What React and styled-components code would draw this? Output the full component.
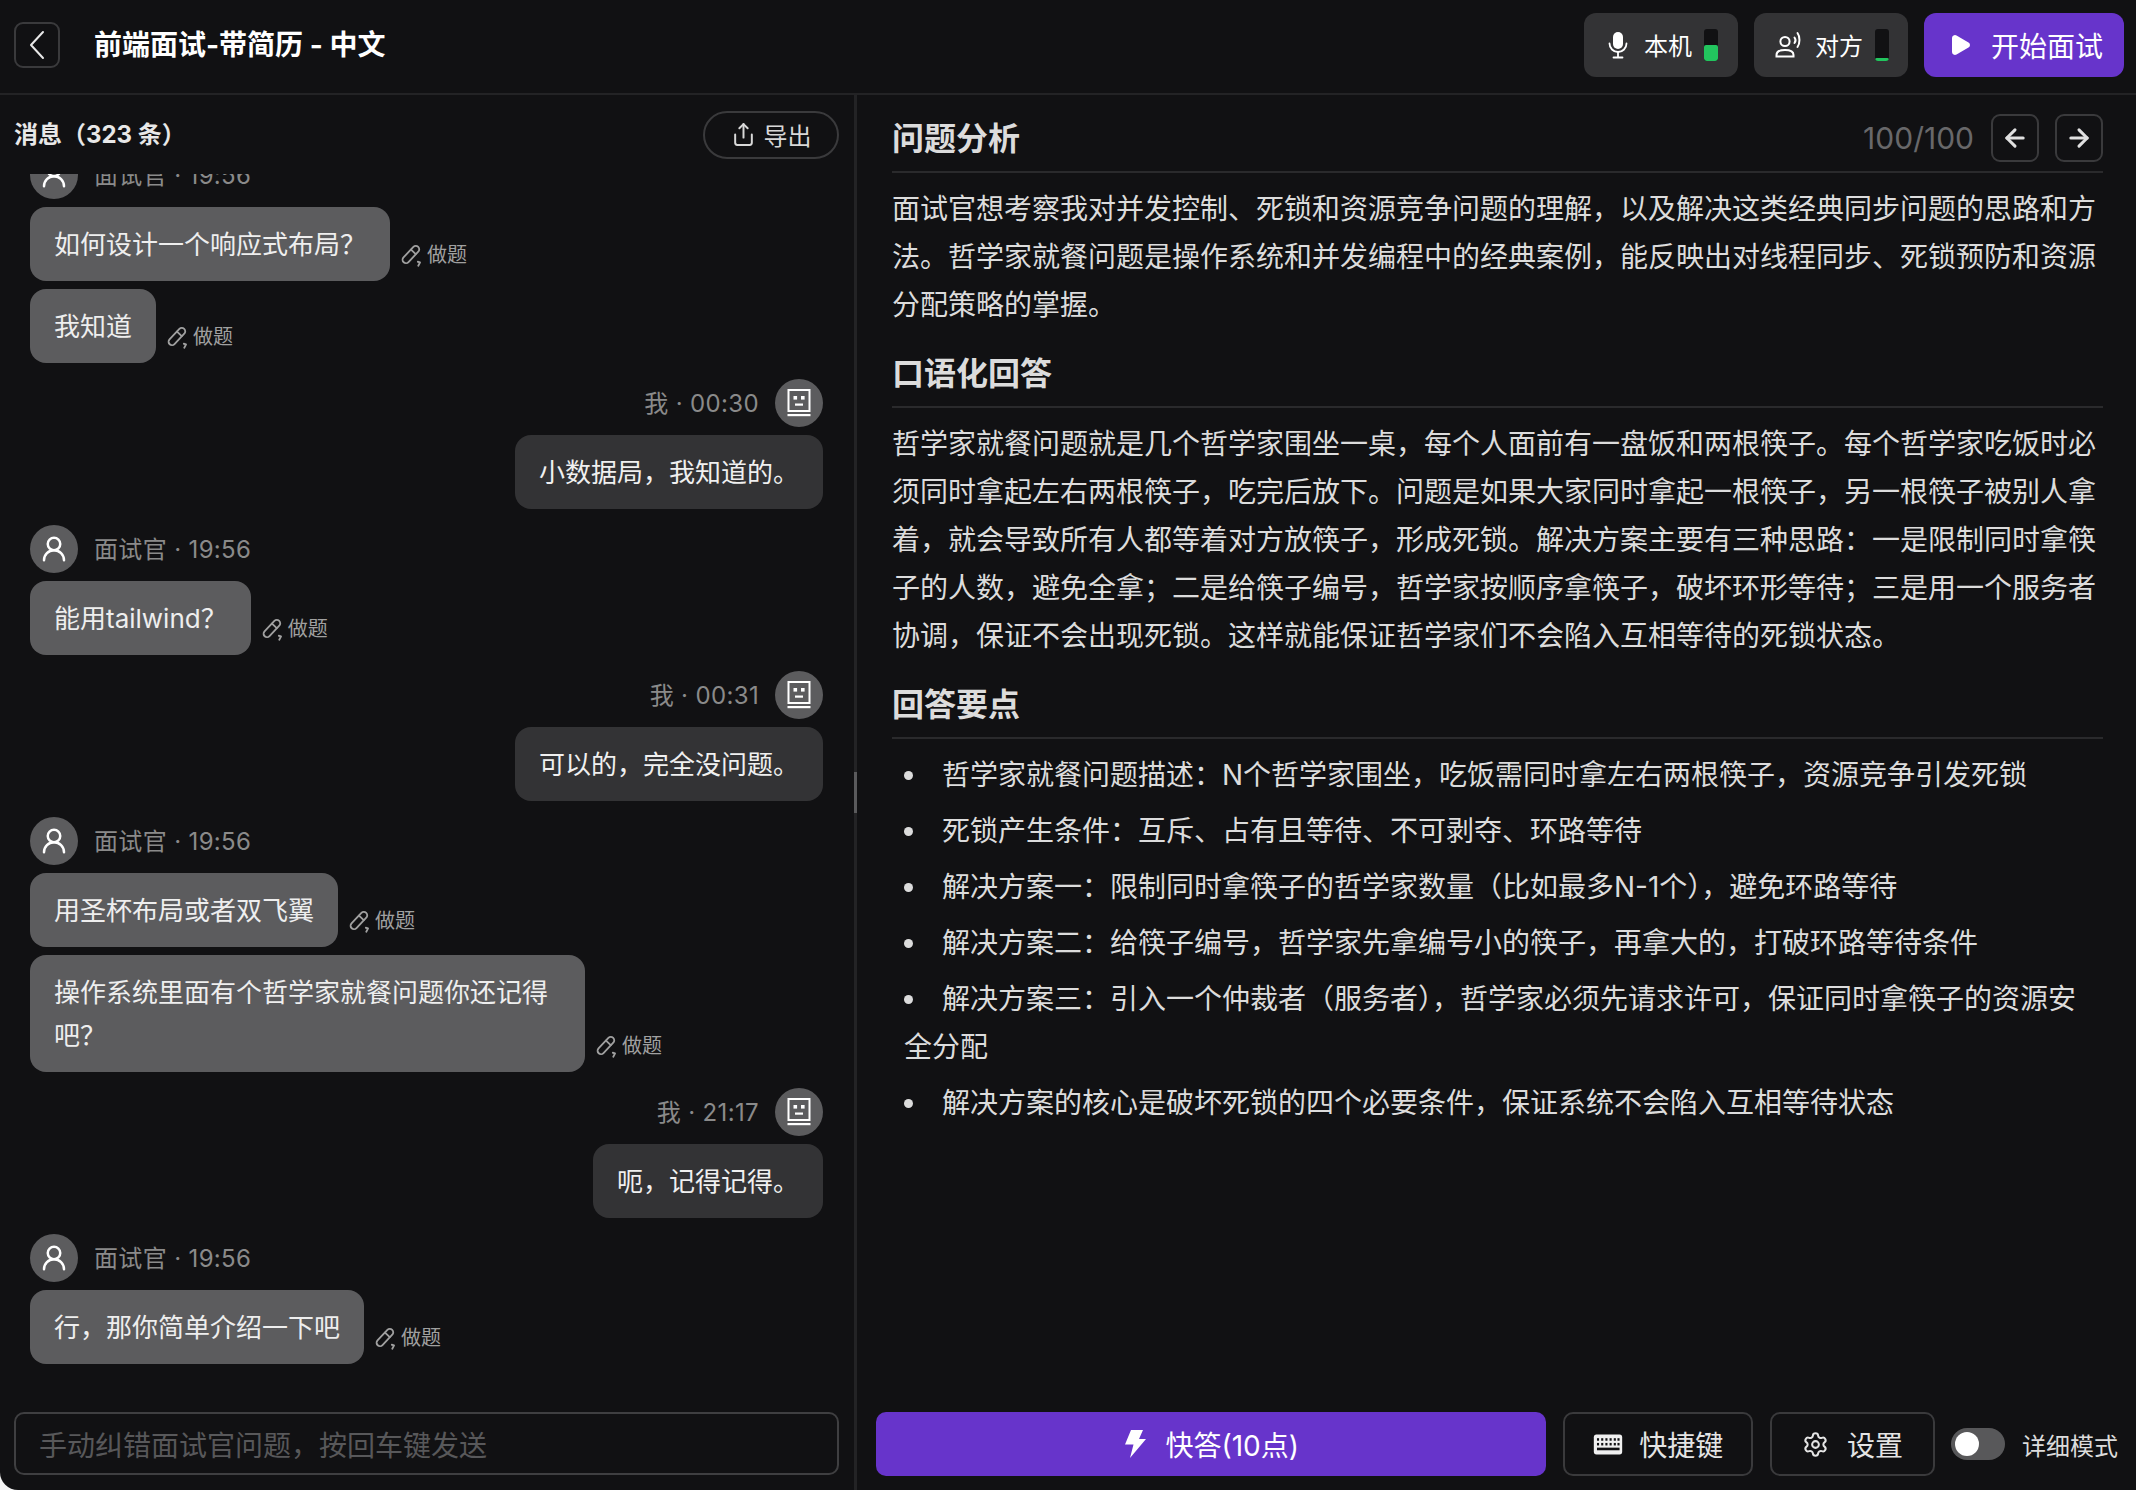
import React from 'react';
import styled, { createGlobalStyle } from 'styled-components';
import { Share, ArrowLeft, ArrowRight, UserRound, Settings, Play } from 'lucide-react';

const Global = createGlobalStyle`
  html, body { margin: 0; padding: 0; background: #f4f4f4; }
  * { box-sizing: border-box; }
  body { font-family: Inter, "Noto Sans CJK SC", "Noto Sans", sans-serif; }
`;

const Shell = styled.div`
  width: 2136px; height: 1490px; display: flex; flex-direction: column;
  background: #111113; color: #e0e0e0; border-bottom-left-radius: 18px; overflow: hidden;
`;
const Header = styled.header`
  height: 95px; flex: none; display: flex; align-items: flex-start; justify-content: space-between;
  padding: 13px 12px 0 14px; border-bottom: 2px solid #232325;
`;
const HeaderLeft = styled.div`display: flex; align-items: center; gap: 34px; height: 64px;`;
const BackButton = styled.button`
  width: 46px; height: 46px; padding: 0; display: flex; align-items: center; justify-content: center;
  background: transparent; border: 2px solid #3a3a3c; border-radius: 9px; color: #e8e8e8;
`;
const Title = styled.h1`margin: 0; font-size: 28px; line-height: 40px; font-weight: 700; color: #fff;`;
const HeaderRight = styled.div`display: flex; gap: 16px;`;
const DeviceChip = styled.div`
  width: 154px; height: 64px; border-radius: 12px; background: #333335; display: flex; align-items: center;
  padding-left: ${p => p.$pad}px; font-size: 24px; color: #fff;
`;
const ChipLabel = styled.span`margin-left: ${p => p.$gap}px; margin-top: -2px;`;
const Meter = styled.div`
  width: 14px; height: 32px; border-radius: 3px; background: #111113; margin-left: 12px;
  display: flex; align-items: flex-end; overflow: hidden;
`;
const MeterFill = styled.div`width: 100%; background: #22c55e; border-radius: 2px;`;
const StartButton = styled.button`
  width: 200px; height: 64px; border: 0; border-radius: 12px; background: #6734cb; color: #fff;
  font: inherit; font-size: 28px; display: flex; align-items: center; padding: 0 0 0 24px; gap: 19px;
`;
const Main = styled.main`flex: 1; display: flex; min-height: 0;`;
const LeftPanel = styled.section`width: 854px; flex: none; display: flex; flex-direction: column;`;
const Divider = styled.div`
  width: 3px; flex: none; background: #232325; display: flex; align-items: center;
`;
const DividerHandle = styled.div`width: 3px; height: 41px; background: #5a5a5c;`;
const PanelHead = styled.div`
  height: 79px; flex: none; display: flex; align-items: center; justify-content: space-between;
  padding: 0 15px 0 14px;
`;
const PanelTitle = styled.h2`margin: 0; font-size: 24px; font-weight: 700; color: #e8e8e8; line-height: 34px;`;
const ExportButton = styled.button`
  width: 136px; height: 48px; border-radius: 24px; border: 2px solid #3a3a3c; background: transparent;
  color: #d8d8d8; font: inherit; font-size: 24px; display: flex; align-items: center; justify-content: center; gap: 8px;
  padding: 0;
`;
const MessageList = styled.div`
  flex: 1; min-height: 0; overflow: hidden; display: flex; flex-direction: column; justify-content: flex-end;
  padding: 0 31px 48px 30px; gap: 16px;
`;
const Group = styled.div`display: flex; flex-direction: column; gap: 8px; align-items: ${p => p.$me ? 'flex-end' : 'flex-start'};`;
const Meta = styled.div`
  display: flex; align-items: center; gap: 16px; height: 48px; font-size: 24px; color: #8a8a8a;
`;
const MetaText = styled.span`letter-spacing: 0.35px; margin-top: -4px;`;
const Avatar = styled.div`
  width: 48px; height: 48px; border-radius: 50%; background: #5c5c5e; color: #fff;
  display: flex; align-items: center; justify-content: center; flex: none;
`;
const BubbleRow = styled.div`display: flex; align-items: flex-end; gap: 9px;`;
const Bubble = styled.div`
  background: #5c5c5e; color: #eee; border-radius: 16px; padding: 15.5px 24px; font-size: 26px; line-height: 43px;
  max-width: ${p => p.$wide ? '555px' : 'none'};
`;
const BubbleMe = styled(Bubble)`background: #333335; color: #f0f0f0;`;
const Solve = styled.div`
  display: flex; align-items: center; gap: 4px; font-size: 20px; line-height: 28px; color: #a0a0a0; margin-bottom: 12px;
`;
const InputWrap = styled.div`padding: 0 15px 15px 14px; flex: none;`;
const FakeInput = styled.div`
  height: 63px; border: 2px solid #3f3f41; border-radius: 10px; display: flex; align-items: center;
  padding-left: 23px; font-size: 28px; color: #58585a;
`;
const RightPanel = styled.section`flex: 1; min-width: 0; display: flex; flex-direction: column;`;
const Content = styled.div`flex: 1; min-height: 0; padding: 21px 33px 0 35px;`;
const Heading = styled.div`
  display: flex; align-items: center; justify-content: space-between; height: 57px; padding-bottom: 10px;
  border-bottom: 2px solid #2a2a2c; margin-top: ${p => p.$top}px;
`;
const HeadingText = styled.h3`margin: 0; font-size: 32px; line-height: 44px; font-weight: 700; color: #dcdcdc;`;
const Pager = styled.div`display: flex; align-items: center; margin-top: -2px;`;
const PagerCount = styled.span`font-size: 30px; color: #68686a; margin-right: 17px;`;
const PagerButton = styled.button`
  width: 48px; height: 48px; padding: 0; border: 2px solid #3a3a3c; border-radius: 9px; background: transparent;
  color: #e0e0e0; display: flex; align-items: center; justify-content: center; margin-left: ${p => p.$gap}px;
`;
const Para = styled.p`margin: 12px 0 0; font-size: 28px; line-height: 48px; color: #dcdcdc;`;
const Points = styled.ul`margin: 12px 0 0; padding: 0 0 0 12px; list-style: disc inside;`;
const Point = styled.li`font-size: 28px; line-height: 48px; color: #dcdcdc; margin-bottom: 8px;`;
const Footer = styled.div`
  flex: none; display: flex; align-items: center; padding: 0 18px 14px 19px; height: 78px;
`;
const QuickButton = styled.button`
  width: 671px; height: 64px; border: 0; border-radius: 10px; background: #6734cb; color: #fff; font: inherit;
  font-size: 28px; display: flex; align-items: center; justify-content: center; gap: 18px; padding: 0;
`;
const GhostButton = styled.button`
  width: ${p => p.$w}px; height: 64px; margin-left: ${p => p.$gap}px; border: 2px solid #3a3a3c; border-radius: 10px;
  background: transparent; color: #e4e4e4; font: inherit; font-size: 28px; display: flex; align-items: center;
  justify-content: center; gap: ${p => p.$g}px; padding: 0;
`;
const Toggle = styled.div`
  width: 54px; height: 32px; border-radius: 16px; background: #58585a; margin-left: 16px; padding: 4px; flex: none;
`;
const Knob = styled.div`width: 24px; height: 24px; border-radius: 50%; background: #fff;`;
const ToggleLabel = styled.span`font-size: 24px; color: #dcdcdc; margin-left: 17px; white-space: nowrap;`;

const BackIcon = () => (
  <svg width="18" height="32" viewBox="0 0 18 32" fill="none" stroke="currentColor" strokeWidth="2" strokeLinecap="round" strokeLinejoin="round">
    <path d="M15 3L3 16l12 13" />
  </svg>
);
const BoltIcon = () => (
  <svg width="24" height="30" viewBox="0 0 24 30" fill="#fff">
    <path d="M8 1h12l-4 9h7L7 29l3.500-13.500H2z" />
  </svg>
);
const PenIcon = () => (
  <svg width="24" height="25" viewBox="0 0 21 22" fill="none" stroke="currentColor" strokeWidth="1.6" strokeLinecap="round" strokeLinejoin="round">
    <path d="M12.600 3.400a3 3 0 0 1 4.300 4.200l-8.600 9.200a3 3 0 0 1-4.400-4.100z" />
    <path d="M10.500 5.800l4.200 4" />
    <path d="M16.500 16.500l2 .5-1.600 3" />
  </svg>
);
const FaceIcon = () => (
  <svg width="28" height="30" viewBox="0 0 28 30" fill="none">
    <rect x="3.500" y="2" width="21" height="21" stroke="#fff" strokeWidth="2" />
    <rect x="8.500" y="8" width="3.600" height="3.600" fill="#fff" />
    <rect x="16" y="8" width="3.600" height="3.600" fill="#fff" />
    <rect x="10" y="15.500" width="8" height="2.200" fill="#fff" />
    <rect x="2.500" y="26" width="23" height="2.200" fill="#fff" />
  </svg>
);
const MicIcon = () => (
  <svg width="20" height="28" viewBox="0 0 20 28" fill="none">
    <rect x="5" y="1" width="10" height="17" rx="5" fill="#fff" />
    <path d="M1.500 12.500a8.500 8.500 0 0 0 17 0" stroke="#fff" strokeWidth="1.800" strokeLinecap="round" />
    <path d="M10 21v5M5.500 26.500h9" stroke="#fff" strokeWidth="1.800" strokeLinecap="round" />
  </svg>
);
const SpeakerIcon = () => (
  <svg width="27" height="28" viewBox="0 0 27 28" fill="none" stroke="#fff" strokeWidth="2" strokeLinecap="round">
    <circle cx="10" cy="10.500" r="4.600" />
    <path d="M1.500 25.500v-1.600c0-3 2.600-4.900 8.500-4.900s8.500 1.900 8.500 4.900v1.600z" />
    <path d="M19.500 6.500c1.100 1.400 1.100 4 0 5.500" />
    <path d="M22.500 2c2.600 3.400 2.600 10.500 0 14" />
  </svg>
);
const KeyboardIcon = () => (
  <svg width="30" height="21" viewBox="0 0 28 20">
    <rect x="0.500" y="0.500" width="27" height="19" rx="2.500" fill="#f0f0f0" />
    {[3.500, 7.500, 11.500, 15.500, 19.500, 23].map(x => <rect key={x} x={x} y="4" width="2" height="2.400" fill="#111113" />)}
    {[3.500, 7.500, 11.500, 15.500, 19.500, 23].map(x => <rect key={x} x={x} y="8.500" width="2" height="2.400" fill="#111113" />)}
    <rect x="3.500" y="13" width="21.500" height="2.500" fill="#111113" />
  </svg>
);

const Solved = () => <Solve><PenIcon />做题</Solve>;
const Them = ({ time, messages }) => (
  <Group>
    <Meta><Avatar><UserRound size={30} strokeWidth={2} /></Avatar><MetaText>面试官 · {time}</MetaText></Meta>
    {messages.map(m => (
      <BubbleRow key={m}><Bubble $wide>{m}</Bubble><Solved /></BubbleRow>
    ))}
  </Group>
);
const Me = ({ time, text }) => (
  <Group $me>
    <Meta><MetaText>我 · {time}</MetaText><Avatar><FaceIcon /></Avatar></Meta>
    <BubbleMe>{text}</BubbleMe>
  </Group>
);

export default function App() {
  return (
    <Shell>
      <Global />
      <Header>
        <HeaderLeft>
          <BackButton aria-label="返回"><BackIcon /></BackButton>
          <Title>前端面试-带简历 - 中文</Title>
        </HeaderLeft>
        <HeaderRight>
          <DeviceChip $pad={24}><MicIcon /><ChipLabel $gap={16}>本机</ChipLabel><Meter><MeterFill style={{ height: '50%' }} /></Meter></DeviceChip>
          <DeviceChip $pad={21}><SpeakerIcon /><ChipLabel $gap={13}>对方</ChipLabel><Meter><MeterFill style={{ height: '3px' }} /></Meter></DeviceChip>
          <StartButton><Play size={24} fill="#fff" strokeWidth={2} />开始面试</StartButton>
        </HeaderRight>
      </Header>
      <Main>
        <LeftPanel>
          <PanelHead>
            <PanelTitle>消息（323 条）</PanelTitle>
            <ExportButton><Share size={25} strokeWidth={1.9} />导出</ExportButton>
          </PanelHead>
          <MessageList>
            <Them time="19:56" messages={['如何设计一个响应式布局？', '我知道']} />
            <Me time="00:30" text="小数据局，我知道的。" />
            <Them time="19:56" messages={['能用tailwind？']} />
            <Me time="00:31" text="可以的，完全没问题。" />
            <Them time="19:56" messages={['用圣杯布局或者双飞翼', '操作系统里面有个哲学家就餐问题你还记得吧？']} />
            <Me time="21:17" text="呃，记得记得。" />
            <Them time="19:56" messages={['行，那你简单介绍一下吧']} />
          </MessageList>
          <InputWrap><FakeInput>手动纠错面试官问题，按回车键发送</FakeInput></InputWrap>
        </LeftPanel>
        <Divider><DividerHandle /></Divider>
        <RightPanel>
          <Content>
            <Heading $top={0}>
              <HeadingText>问题分析</HeadingText>
              <Pager>
                <PagerCount>100/100</PagerCount>
                <PagerButton $gap={0} aria-label="上一个"><ArrowLeft size={28} strokeWidth={2.6} /></PagerButton>
                <PagerButton $gap={16} aria-label="下一个"><ArrowRight size={28} strokeWidth={2.6} /></PagerButton>
              </Pager>
            </Heading>
            <Para>面试官想考察我对并发控制、死锁和资源竞争问题的理解，以及解决这类经典同步问题的思路和方法。哲学家就餐问题是操作系统和并发编程中的经典案例，能反映出对线程同步、死锁预防和资源分配策略的掌握。</Para>
            <Heading $top={22}><HeadingText>口语化回答</HeadingText></Heading>
            <Para>哲学家就餐问题就是几个哲学家围坐一桌，每个人面前有一盘饭和两根筷子。每个哲学家吃饭时必须同时拿起左右两根筷子，吃完后放下。问题是如果大家同时拿起一根筷子，另一根筷子被别人拿着，就会导致所有人都等着对方放筷子，形成死锁。解决方案主要有三种思路：一是限制同时拿筷子的人数，避免全拿；二是给筷子编号，哲学家按顺序拿筷子，破坏环形等待；三是用一个服务者协调，保证不会出现死锁。这样就能保证哲学家们不会陷入互相等待的死锁状态。</Para>
            <Heading $top={22}><HeadingText>回答要点</HeadingText></Heading>
            <Points>
              <Point>哲学家就餐问题描述：N个哲学家围坐，吃饭需同时拿左右两根筷子，资源竞争引发死锁</Point>
              <Point>死锁产生条件：互斥、占有且等待、不可剥夺、环路等待</Point>
              <Point>解决方案一：限制同时拿筷子的哲学家数量（比如最多N-1个），避免环路等待</Point>
              <Point>解决方案二：给筷子编号，哲学家先拿编号小的筷子，再拿大的，打破环路等待条件</Point>
              <Point>解决方案三：引入一个仲裁者（服务者），哲学家必须先请求许可，保证同时拿筷子的资源安全分配</Point>
              <Point>解决方案的核心是破坏死锁的四个必要条件，保证系统不会陷入互相等待状态</Point>
            </Points>
          </Content>
          <Footer>
            <QuickButton><BoltIcon />快答(10点)</QuickButton>
            <GhostButton $w={190} $gap={17} $g={16}><KeyboardIcon />快捷键</GhostButton>
            <GhostButton $w={165} $gap={17} $g={18}><Settings size={27} strokeWidth={1.8} />设置</GhostButton>
            <Toggle><Knob /></Toggle>
            <ToggleLabel>详细模式</ToggleLabel>
          </Footer>
        </RightPanel>
      </Main>
    </Shell>
  );
}
